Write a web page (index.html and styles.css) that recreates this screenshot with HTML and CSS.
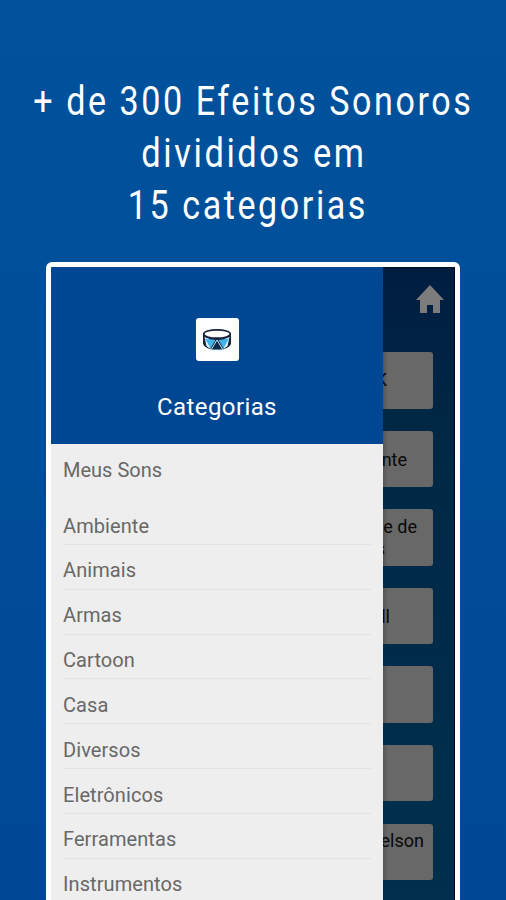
FILE: index.html
```html
<!DOCTYPE html>
<html lang="pt-BR">
<head>
<meta charset="utf-8">
<title>Efeitos Sonoros</title>
<link rel="stylesheet" href="styles.css">
</head>
<body>
<main class="promo">
  <h1 class="headline">
    <span class="line line-a">+ de 300 Efeitos Sonoros</span>
    <span class="line line-b">divididos em</span>
    <span class="line line-c">15 categorias</span>
  </h1>
  <section class="phone">
    <nav class="drawer">
      <header class="drawer-head">
        <div class="logo">
          <svg width="30" height="24" viewBox="0 0 30 24">
            <path d="M1 6v10c4 8 24 8 28 0V6z" fill="#17243b"/>
            <path d="M2.500 9l5 2 1 10-4-3zM27.500 9l-5 2-1 10 4-3z" fill="#e8f6fd"/>
            <path d="M3 10.500l10.500 1.500-5 8.500zM27 10.500l-10.500 1.500 5 8.500z" fill="#42b4e8"/>
            <path d="M9 22l6-10 6 10z" fill="#0b2a4a" stroke="#c9ecfb" stroke-width="1"/>
            <ellipse cx="15" cy="6" rx="13.3" ry="4.200" fill="#fff" stroke="#17243b" stroke-width="1.700"/>
          </svg>
        </div>
        <h2 class="drawer-title">Categorias</h2>
      </header>
      <p class="mine">Meus Sons</p>
      <ul class="list">
        <li>Ambiente</li>
        <li>Animais</li>
        <li>Armas</li>
        <li>Cartoon</li>
        <li>Casa</li>
        <li>Diversos</li>
        <li>Eletrônicos</li>
        <li>Ferramentas</li>
        <li>Instrumentos</li>
      </ul>
    </nav>
    <div class="board">
      <div class="bar">
        <svg class="home" width="28" height="28" viewBox="0 0 28 28"><path d="M14 0L28 15h-4v13h-7v-8h-6v8H4V15H0z" fill="#7c7c7c"/></svg>
      </div>
      <div class="tile t1">K</div>
      <div class="tile t2">nte</div>
      <div class="tile t3">e de<br><span class="tail">s</span></div>
      <div class="tile t4">ll</div>
      <div class="tile"></div>
      <div class="tile"></div>
      <div class="tile t7">elson<br>&nbsp;</div>
    </div>
  </section>
</main>
</body>
</html>
```
FILE: styles.css
```css
* { box-sizing: border-box; }
body { margin: 0; font-family: Roboto, sans-serif; }
.promo {
  width: 506px; height: 900px; overflow: hidden;
  padding-top: 76px;
  background: linear-gradient(#00529c, #004895);
}
.headline {
  margin: 0; height: 186px; color: #fff;
  font-weight: 400; font-size: 40px; line-height: 52px;
  display: flex; flex-direction: column; align-items: center;
}
.line { white-space: nowrap; letter-spacing: 3px; transform: scaleX(0.852); margin-right: -1px; }
.line-b { transform: scaleX(0.86); }
.line-c { margin-right: 10px; }
.phone {
  width: 414px; height: 660px; margin-left: 46px;
  border: 5px solid #fff; border-radius: 6px;
  display: flex; overflow: hidden;
}
.drawer { width: 332px; flex: none; background: #eee; color: #686868; font-size: 20px; }
.drawer-head {
  height: 177px; background: #004793; color: #fff;
  display: flex; flex-direction: column; align-items: center; padding-top: 51px;
}
.logo {
  width: 43px; height: 43px; background: #fff; border-radius: 3px;
  display: flex; align-items: center; justify-content: center;
}
.drawer-title { margin: 31px 0 0; font-weight: 400; font-size: 24px; line-height: 30px; letter-spacing: 0.4px; }
.mine { margin: 0; padding: 12px 12px 0; height: 56px; line-height: 28px; }
.list { margin: 0; padding: 0 12px; list-style: none; letter-spacing: 0.08px; }
.list li { height: 44.85px; padding-top: 11.5px; line-height: 28px; border-bottom: 1px solid #e2e2e2; }
.board {
  flex: 1; background: linear-gradient(#001d40, #002845 25%, #00304d);
  border-right: 1px solid #000022; border-top: 1px solid #001020;
}
.bar { height: 84px; padding: 17px 10px 0 0; display: flex; justify-content: flex-end; align-items: flex-start; }
.tile {
  width: 50px; height: 56.5px; margin-bottom: 22.1px;
  background: linear-gradient(90deg, #555, #686868 5px); border-radius: 0 3px 3px 0;
  color: #080808; font-size: 18px; line-height: 22px;
  display: flex; flex-direction: column; justify-content: center; align-items: flex-end;
  white-space: nowrap; overflow: hidden;
}
.t1 { padding-right: 46px; }
.t2 { padding-right: 26px; padding-top: 2px; }
.t3 { padding-right: 16px; padding-top: 2px; }
.t4 { padding-right: 43px; padding-top: 2px; }
.t7 { padding-right: 9px; }
.tail { margin-right: 32px; }
```
